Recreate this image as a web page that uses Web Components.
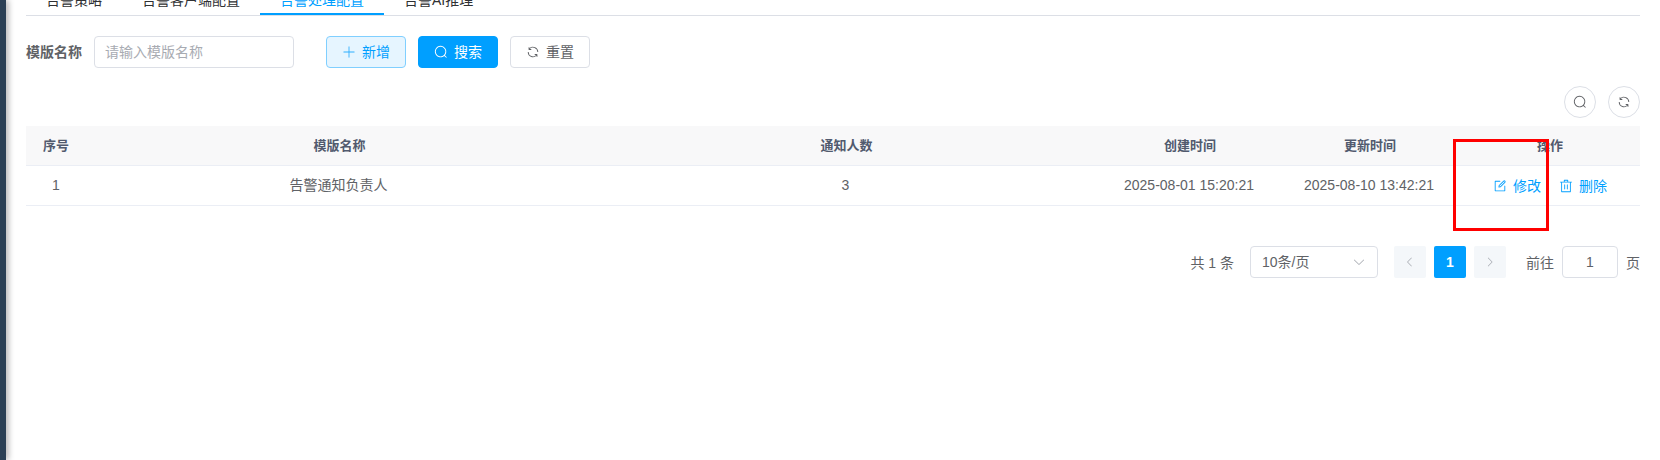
<!DOCTYPE html>
<html lang="zh-CN">
<head>
<meta charset="utf-8">
<title>告警处理配置</title>
<style>
html, body { margin: 0; height: 100%; overflow: hidden; background: #fff; }
body {
  font: 14px/20px "Liberation Sans", "Noto Sans CJK SC", sans-serif; color: #606266;
  --primary: #009fff; --line: #dcdfe6; --soft: #ebeef5;
}
</style>
</head>
<body>
<alarm-page></alarm-page>
<script>
const ICONS = {
  plus: 'M480 480V128a32 32 0 0 1 64 0v352h352a32 32 0 1 1 0 64H544v352a32 32 0 1 1-64 0V544H128a32 32 0 0 1 0-64z',
  search: 'm795.904 750.72 124.992 124.928a32 32 0 0 1-45.248 45.248L750.656 795.904a416 416 0 1 1 45.248-45.248zM480 832a352 352 0 1 0 0-704 352 352 0 0 0 0 704z',
  refresh: 'M771.776 794.88A384 384 0 0 1 128 512h64a320 320 0 0 0 555.712 216.448H654.72a32 32 0 1 1 0-64h149.056a32 32 0 0 1 32 32v148.928a32 32 0 1 1-64 0v-50.56zM276.288 295.616h92.992a32 32 0 0 1 0 64H220.16a32 32 0 0 1-32-32V178.56a32 32 0 0 1 64 0v50.56A384 384 0 0 1 896.128 512h-64a320 320 0 0 0-555.776-216.384z',
  edit: 'M832 512a32 32 0 1 1 64 0v352a32 32 0 0 1-32 32H160a32 32 0 0 1-32-32V160a32 32 0 0 1 32-32h352a32 32 0 0 1 0 64H192v640h640V512zM469.952 554.24l52.8-7.552L847.104 222.4a32 32 0 1 0-45.248-45.248L477.44 501.44l-7.552 52.8zm422.4-422.4a96 96 0 0 1 0 135.808l-331.84 331.84a32 32 0 0 1-18.112 9.088L436.8 623.68a32 32 0 0 1-36.224-36.224l15.104-105.6a32 32 0 0 1 9.024-18.112l331.904-331.84a96 96 0 0 1 135.744 0z',
  delete: 'M160 256H96a32 32 0 0 1 0-64h256V95.936a32 32 0 0 1 32-32h256a32 32 0 0 1 32 32V192h256a32 32 0 1 1 0 64h-64v672a32 32 0 0 1-32 32H192a32 32 0 0 1-32-32V256zm448-64v-64H416v64h192zM224 896h576V256H224v640zm192-128a32 32 0 0 1-32-32V416a32 32 0 0 1 64 0v320a32 32 0 0 1-32 32zm192 0a32 32 0 0 1-32-32V416a32 32 0 0 1 64 0v320a32 32 0 0 1-32 32z',
  down: 'M831.872 340.864 512 652.672 192.128 340.864a30.592 30.592 0 0 0-42.752 0 29.12 29.12 0 0 0 0 41.6L489.664 714.24a32 32 0 0 0 44.672 0l340.288-331.712a29.12 29.12 0 0 0 0-41.728 30.592 30.592 0 0 0-42.752 0z',
  left: 'M609.408 149.376 277.76 489.6a32 32 0 0 0 0 44.672l331.648 340.352a29.12 29.12 0 0 0 41.728 0 30.592 30.592 0 0 0 0-42.752L339.264 511.936l311.872-319.872a30.592 30.592 0 0 0 0-42.688 29.12 29.12 0 0 0-41.728 0z',
  right: 'M340.864 149.312a30.592 30.592 0 0 0 0 42.752L652.736 512 340.864 831.872a30.592 30.592 0 0 0 0 42.752 29.12 29.12 0 0 0 41.728 0L714.24 534.336a32 32 0 0 0 0-44.672L382.592 149.376a29.12 29.12 0 0 0-41.728 0z'
};

const define = (name, render) => customElements.define(name, class extends HTMLElement {
  constructor() {
    super();
    this.attachShadow({ mode: 'open' });
  }
  connectedCallback() { this.shadowRoot.innerHTML = render(this); }
});

define('ui-icon', el => `<style>
:host { display: block; flex: none; width: 14px; height: 14px; }
svg { display: block; width: 100%; height: 100%; }
</style><svg viewBox="0 0 1024 1024"><path fill="currentColor" d="${ICONS[el.getAttribute('name')]}"/></svg>`);

define('ui-button', el => `<style>
:host { display: flex; align-items: center; justify-content: center; gap: 6px; box-sizing: border-box;
  height: 32px; padding: 0 15px; border: 1px solid var(--line); border-radius: 4px; background: #fff; }
:host([kind=plain]) { color: var(--primary); background: #e6f5ff; border-color: #80cfff; }
:host([kind=plain]) ui-icon { opacity: .8; }
:host([kind=primary]) { color: #fff; background: var(--primary); border-color: var(--primary); }
:host([kind=circle]) { width: 32px; padding: 0; border-radius: 50%; }
:host([kind=link]) { height: 24px; padding: 0; border: 0; background: none; color: var(--primary); }
</style><ui-icon name="${el.getAttribute('icon')}"></ui-icon>${el.textContent ? '<slot></slot>' : ''}`);

define('ui-field', () => `<style>
:host { display: flex; align-items: center; box-sizing: border-box; height: 32px; padding: 0 11px;
  border: 1px solid var(--line); border-radius: 4px; background: #fff; }
:host([placeholder]) { color: #a8abb2; padding-left: 10px; }
:host([centered]) { justify-content: center; }
:host([select]) { justify-content: space-between; }
::slotted(ui-icon) { color: #a8abb2; }
</style><slot></slot>`);

define('ui-tab', () => `<style>
:host { display: block; box-sizing: border-box; height: 40px; padding: 15px 20px 0; line-height: 20px; color: #303133; }
:host([active]) { color: var(--primary); border-bottom: 2px solid var(--primary); }
</style><slot></slot>`);

define('ui-tabs', () => `<style>
:host { display: flex; height: 40px; margin-top: -25px; border-bottom: 1px solid var(--line); }
</style><slot></slot>`);

define('data-row', () => `<style>
:host { display: grid; grid-template-columns: 60px 1fr 1fr 180px 180px 180px; box-sizing: border-box; height: 40px;
  align-items: center; text-align: center; border-bottom: 1px solid var(--soft); }
:host([head]) { background: #f8f8f9; color: #515a6e; font-size: 13px; font-weight: 700; }
:host(:not([head])) ::slotted(span) { margin-bottom: 1px; }
:host(:not([head])) ::slotted(span:not(:first-child)) { margin-right: 2px; }
::slotted(div) { display: flex; justify-content: center; gap: 18px; }
</style><slot></slot>`);

define('page-button', () => `<style>
:host { display: flex; align-items: center; justify-content: center; width: 32px; height: 32px; border-radius: 2px;
  background: #f4f7fa; color: #a8abb2; }
:host([active]) { background: var(--primary); color: #fff; font-weight: 700; }
::slotted(ui-icon) { width: 12px; height: 12px; }
</style><slot></slot>`);

define('table-pager', () => `<style>
:host { display: flex; justify-content: flex-end; align-items: center; height: 32px; margin-top: 40px; }
.size { width: 128px; margin: 0 16px; }
.pages { display: flex; gap: 8px; margin-right: 20px; }
.page { width: 56px; margin: 0 8px; }
.text { padding-top: 2px; }
</style>
<span class="text">共 1 条</span>
<ui-field class="size" select><span>10条/页</span><ui-icon name="down"></ui-icon></ui-field>
<div class="pages"><page-button><ui-icon name="left"></ui-icon></page-button><page-button active>1</page-button><page-button><ui-icon name="right"></ui-icon></page-button></div>
<span class="text">前往</span><ui-field class="page" centered>1</ui-field><span class="text">页</span>`);

define('alarm-page', () => `<style>
:host { display: flex; height: 460px; position: relative; }
aside { width: 6px; flex: none; background: #2b4055; box-shadow: 2px 0 6px rgba(0,0,0,.35); }
main { flex: 1; padding: 0 20px; }
.form { display: flex; align-items: center; margin-top: 20px; }
.form b { margin-right: 12px; }
.form ui-field { width: 200px; margin-right: 32px; }
.buttons { display: flex; gap: 12px; }
.tools { display: flex; justify-content: flex-end; gap: 12px; margin: 18px 0 8px; }
.mark { position: absolute; left: 1453px; top: 139px; width: 90px; height: 86px; border: 3px solid #f00; }
</style>
<aside></aside>
<main>
  <ui-tabs><ui-tab>告警策略</ui-tab><ui-tab>告警客户端配置</ui-tab><ui-tab active>告警处理配置</ui-tab><ui-tab>告警AI推理</ui-tab></ui-tabs>
  <div class="form"><b>模版名称</b><ui-field placeholder>请输入模版名称</ui-field>
    <div class="buttons"><ui-button kind="plain" icon="plus">新增</ui-button><ui-button kind="primary" icon="search">搜索</ui-button><ui-button icon="refresh">重置</ui-button></div></div>
  <div class="tools"><ui-button kind="circle" icon="search"></ui-button><ui-button kind="circle" icon="refresh"></ui-button></div>
  <data-row head><span>序号</span><span>模版名称</span><span>通知人数</span><span>创建时间</span><span>更新时间</span><span>操作</span></data-row>
  <data-row><span>1</span><span>告警通知负责人</span><span>3</span><span>2025-08-01 15:20:21</span><span>2025-08-10 13:42:21</span><div><ui-button kind="link" icon="edit">修改</ui-button><ui-button kind="link" icon="delete">删除</ui-button></div></data-row>
  <table-pager></table-pager>
</main>
<div class="mark"></div>`);
</script>
</body>
</html>
